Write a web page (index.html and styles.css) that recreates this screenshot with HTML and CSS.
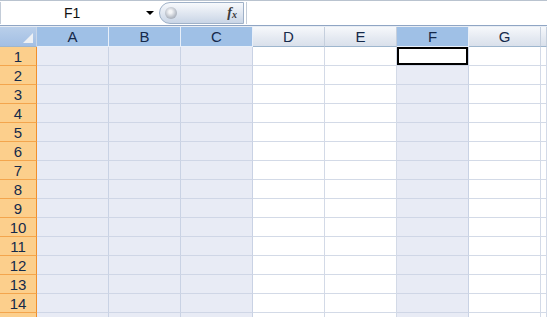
FILE: index.html
```html
<!DOCTYPE html>
<html lang="en">
<head>
    <meta charset="UTF-8">
    <title>Sheet1</title>
    <link rel="stylesheet" href="styles.css">
</head>
<body>
    <div class="formula-bar">
        <div class="name-box">
            <span class="name">F1</span>
            <span class="caret"></span>
        </div>
        <div class="fx-pill">
            <span class="knob"></span>
            <span class="fx">f<sub>x</sub></span>
        </div>
        <div class="formula-input"></div>
    </div>
    <div class="gap"></div>

    <div class="sheet" id="sheet"></div>

    <script>
        const columns = ['A', 'B', 'C', 'D', 'E', 'F', 'G', ''];
        const selectedCols = ['A', 'B', 'C', 'F'];
        const sheet = document.getElementById('sheet');

        function addCell(className, text) {
            const el = document.createElement('div');
            el.className = className;
            if (text !== undefined) el.innerText = text;
            sheet.appendChild(el);
        }

        // header row
        addCell('corner');
        columns.forEach(col => {
            addCell('col-head' + (selectedCols.includes(col) ? ' selected' : ''), col);
        });

        // rows
        for (let r = 1; r <= 15; r++) {
            addCell('row-head', r);
            columns.forEach(col => {
                let cls = 'cell';
                if (selectedCols.includes(col)) cls += ' shaded';
                if (col === 'F' && r === 1) cls += ' active';
                addCell(cls);
            });
        }
    </script>
</body>
</html>
```

FILE: styles.css
```css
body {
    margin: 0;
    width: 547px;
    height: 317px;
    overflow: hidden;
    background-color: #fff;
    font-family: "Liberation Sans", Arial, sans-serif;
}

.formula-bar {
    display: flex;
    align-items: center;
    height: 24px;
    border-top: 1px solid #b9c3cf;
    border-bottom: 1px solid #8fa5c4;
    background-color: #fff;
}

.name-box {
    display: flex;
    align-items: center;
    width: 157px;
    height: 22px;
    border-left: 1px solid #c3ccd8;
    box-sizing: border-box;
}

.name {
    font-size: 14px;
    color: #111;
    margin-left: 63px;
}

.caret {
    margin-left: auto;
    margin-right: 3px;
    width: 0;
    height: 0;
    border-left: 4px solid transparent;
    border-right: 4px solid transparent;
    border-top: 4px solid #000;
}

.fx-pill {
    display: flex;
    align-items: center;
    width: 85px;
    height: 22px;
    margin-left: 2px;
    border: 1px solid #9fb1c8;
    border-radius: 12px 0 0 12px;
    background: linear-gradient(#f7f9fc, #e3e9f2 45%, #c9d5e6);
    box-sizing: border-box;
}

.knob {
    width: 12px;
    height: 12px;
    margin-left: 5px;
    border-radius: 50%;
    background: radial-gradient(circle at 45% 40%, #f4f5f7 15%, #b6bcc6 60%, #8f98a5);
}

.fx {
    margin-left: auto;
    margin-right: 6px;
    font-family: "Liberation Serif", serif;
    font-style: italic;
    font-weight: bold;
    font-size: 14px;
    color: #3a3a3a;
}

.fx sub {
    font-size: 10px;
    vertical-align: -1px;
}

.formula-input {
    flex: 1;
    height: 22px;
    margin-left: 2px;
    border-left: 1px solid #c3ccd8;
}

.gap {
    height: 1px;
    background-color: #e8edf4;
}

.sheet {
    display: grid;
    grid-template-columns: 37px repeat(7, 72px) 1fr;
    grid-template-rows: 20px repeat(15, 19px);
}

.corner {
    position: relative;
    background: linear-gradient(#b9cfea, #a3bfe4);
    border-right: 1px solid #c9d6e8;
    border-bottom: 1px solid #9eb6ce;
    box-sizing: border-box;
}

.corner::after {
    content: "";
    position: absolute;
    right: 3px;
    bottom: 3px;
    width: 0;
    height: 0;
    border-left: 10px solid transparent;
    border-bottom: 10px solid #eef1f5;
}

.col-head {
    display: flex;
    align-items: center;
    justify-content: center;
    font-size: 15px;
    color: #15294a;
    background: linear-gradient(#f6f8fb, #e4e9f1 60%, #d9e0eb);
    border-right: 1px solid #c5cfdd;
    border-bottom: 1px solid #9eb6ce;
    box-sizing: border-box;
}

.col-head.selected {
    background: #9fc0e6;
    border-right-color: #e8eff9;
    border-bottom-color: #e8eff9;
}

.row-head {
    display: flex;
    align-items: center;
    justify-content: center;
    font-size: 15px;
    color: #142a4a;
    background-color: #fccf8c;
    border-right: 1px solid #f08f2c;
    border-bottom: 1px solid #f3a54d;
    box-sizing: border-box;
}

.cell {
    border-right: 1px solid #d3dae7;
    border-bottom: 1px solid #d3dae7;
    box-sizing: border-box;
}

.cell.shaded {
    background-color: #e8ebf5;
    border-right-color: #c9d2e4;
    border-bottom-color: #cfd6e6;
}

.cell.active {
    background-color: #fff;
    box-shadow: inset 0 0 0 2px #000;
}
```
